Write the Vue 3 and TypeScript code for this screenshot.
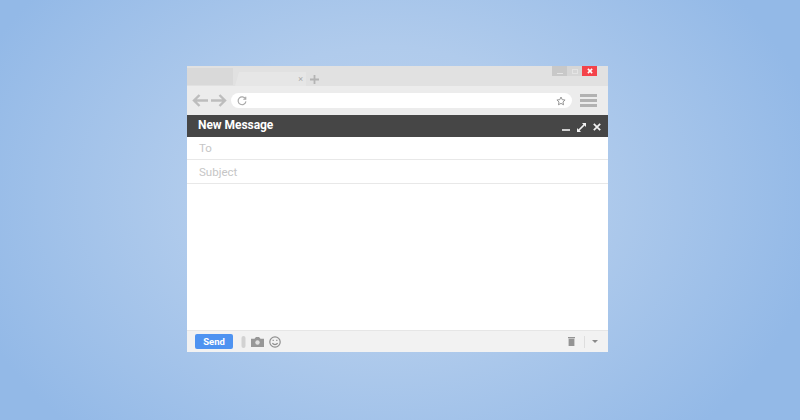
<template>
  <div class="page">
    <div class="window">
      <div class="tabbar">
        <div class="tab-old"></div>
        <div class="tab-active">
          <span class="tab-close">×</span>
        </div>
        <svg class="tab-new" width="9" height="9" viewBox="0 0 9 9">
          <path d="M4.500 0v9M0 4.500h9" stroke="#b4b4b4" stroke-width="1.800" />
        </svg>
        <div class="win-btns">
          <span class="win-btn"><i class="win-min"></i></span>
          <span class="win-btn light"><i class="win-max"></i></span>
          <span class="win-btn close">
            <svg width="6" height="6" viewBox="0 0 7 7">
              <path d="M1 1l5 5M6 1l-5 5" stroke="#fff" stroke-width="1.800" />
            </svg>
          </span>
        </div>
      </div>

      <div class="toolbar">
        <svg width="16" height="13" viewBox="0 0 16 13" fill="none" stroke="#bdbdbd" stroke-width="2.400">
          <path d="M16 6.500H2M7.500 1L2 6.500 7.500 12" />
        </svg>
        <svg class="forward" width="16" height="13" viewBox="0 0 16 13" fill="none" stroke="#bdbdbd" stroke-width="2.400">
          <path d="M0 6.500h14M8.500 1L14 6.500 8.500 12" />
        </svg>
        <div class="address">
          <svg width="10" height="10" viewBox="0 0 11 11" fill="none" stroke="#a8a8a8" stroke-width="1.300">
            <path d="M9.300 3.200A4.300 4.300 0 1 0 9.800 6" />
            <path d="M9.600 0.800v2.800H6.900" />
          </svg>
          <svg class="star" width="10" height="10" viewBox="0 0 24 24" fill="none" stroke="#8c8c8c" stroke-width="2.200">
            <path d="M12 2.500l2.900 6.300 6.900.8-5.100 4.700 1.400 6.800-6.100-3.400-6.100 3.400 1.400-6.800-5.100-4.700 6.900-.8z" />
          </svg>
        </div>
        <div class="menu"><i></i><i></i><i></i></div>
      </div>

      <div class="compose-head">
        <span class="compose-title">New Message</span>
        <div class="compose-actions">
          <svg width="8" height="8" viewBox="0 0 8 8"><path d="M0 7h8" stroke="#f2f2f2" stroke-width="1.600" /></svg>
          <svg width="9" height="9" viewBox="0 0 9 9" fill="#f2f2f2">
            <path d="M5 0h4v4L7.600 2.600 2.600 7.600 4 9H0V5l1.400 1.400 5-5z" />
          </svg>
          <svg width="8" height="8" viewBox="0 0 8 8"><path d="M.8.800l6.400 6.400M7.200.800L.8 7.200" stroke="#f2f2f2" stroke-width="1.700" /></svg>
        </div>
      </div>

      <div class="field to">To</div>
      <div class="field subject">Subject</div>
      <div class="body"></div>

      <div class="footer">
        <button class="send">Send</button>
        <svg class="clip" width="5" height="12" viewBox="0 0 5 12">
          <rect x="0.500" y="0" width="4" height="12" rx="2" fill="#d2d2d2" />
        </svg>
        <svg class="camera" width="13" height="10" viewBox="0 0 13 10">
          <path d="M0 1.800h3.500L5 0h3l1.500 1.800H13V10H0z" fill="#979797" />
          <circle cx="6.500" cy="5.500" r="2.200" fill="#e0e0e0" />
        </svg>
        <svg class="smile" width="12" height="12" viewBox="0 0 12 12" fill="none" stroke="#8f8f8f" stroke-width="1.200">
          <circle cx="6" cy="6" r="5.200" />
          <path d="M3.400 7.200c1.200 1.800 4 1.800 5.200 0" />
          <path d="M4.200 3.800v1.200M7.800 3.800v1.200" />
        </svg>
        <svg class="trash" width="7" height="9" viewBox="0 0 7 9">
          <path d="M0 0h7v1.200H0zM.6 1.800h5.800V9H.6z" fill="#949494" />
        </svg>
        <span class="divider"></span>
        <span class="caret"></span>
      </div>
    </div>
  </div>
</template>

<script setup lang="ts">
</script>

<style>
html,
body {
  margin: 0;
}
</style>

<style scoped>
.page {
  box-sizing: border-box;
  width: 800px;
  height: 420px;
  padding: 66px 192px 68px 187px;
  overflow: hidden;
  background: radial-gradient(ellipse 440px 330px at 385px 195px, #bcd2ef 0%, #b0cbec 45%, #93b9e7 100%);
  font-family: "Roboto", "Liberation Sans", sans-serif;
}

.window {
  display: flex;
  flex-direction: column;
  height: 286px;
  background: #fff;
}

.tabbar {
  display: flex;
  align-items: flex-end;
  height: 20px;
  background: #e1e1e1;
}

.tab-old {
  width: 46px;
  height: 17px;
  margin-bottom: 1px;
  background: #d9d9d9;
}

.tab-active {
  display: flex;
  align-items: center;
  justify-content: flex-end;
  width: 71px;
  height: 14px;
  margin-left: 2px;
  padding-right: 3px;
  box-sizing: border-box;
  background: #e6e6e6;
  clip-path: polygon(4px 0, 100% 0, 100% 100%, 0 100%);
}

.tab-close {
  color: #aaa;
  font-size: 9px;
  line-height: 1;
}

.tab-new {
  margin: 0 0 2px 4px;
}

.win-btns {
  display: flex;
  align-self: flex-start;
  margin-left: auto;
  margin-right: 11px;
}

.win-btn {
  display: flex;
  align-items: center;
  justify-content: center;
  width: 15px;
  height: 10px;
  background: #c8c8c8;
}

.win-btn.light {
  background: #d6d6d6;
}

.win-btn.close {
  background: #f4434a;
}

.win-min {
  width: 6px;
  height: 1px;
  margin-top: 4px;
  background: #e4e4e4;
}

.win-max {
  width: 6px;
  height: 5px;
  border: 1px solid #e4e4e4;
  box-sizing: border-box;
}

.toolbar {
  display: flex;
  align-items: center;
  height: 29px;
  padding: 0 11px 0 5px;
  box-sizing: border-box;
  background: #ececec;
}

.forward {
  margin-left: 3px;
}

.address {
  display: flex;
  flex: 1;
  align-items: center;
  justify-content: space-between;
  height: 15px;
  margin: 0 8px 0 4px;
  padding: 0 6px;
  border-radius: 8px;
  background: #fff;
}

.menu {
  display: flex;
  flex-direction: column;
  gap: 2px;
  width: 17px;
}

.menu i {
  height: 3px;
  background: #b2b2b2;
}

.compose-head {
  display: flex;
  align-items: center;
  justify-content: space-between;
  height: 22px;
  padding: 0 7px 2px 11px;
  box-sizing: border-box;
  background: #464646;
}

.compose-title {
  color: #fff;
  font-size: 12px;
  font-weight: 700;
  letter-spacing: -0.050px;
}

.compose-actions {
  display: flex;
  align-items: center;
  gap: 7px;
  padding-top: 4px;
}

.field {
  display: flex;
  align-items: center;
  padding-left: 12px;
  border-bottom: 1px solid #e8e8e8;
  box-sizing: border-box;
  color: #c6c6c6;
  font-size: 11.500px;
}

.to {
  height: 23px;
}

.subject {
  height: 24px;
}

.body {
  flex: 1;
}

.footer {
  display: flex;
  align-items: center;
  height: 22px;
  padding: 0 9px 0 8px;
  border-top: 1px solid #e6e6e6;
  box-sizing: border-box;
  background: #f2f2f2;
}

.send {
  width: 38px;
  height: 15px;
  padding: 0;
  border: 0;
  border-radius: 2px;
  background: #4e93f1;
  color: #fff;
  font-family: inherit;
  font-size: 9.500px;
  font-weight: 700;
}

.clip {
  margin: 0 5px 0 8px;
}

.smile {
  margin-left: 5px;
}

.trash {
  margin-left: auto;
}

.divider {
  width: 1px;
  height: 12px;
  margin: 0 7px 0 9px;
  background: #dedede;
}

.caret {
  width: 0;
  height: 0;
  margin-right: 1px;
  border: 3px solid transparent;
  border-top: 3px solid #8a8a8a;
  border-bottom: 0;
}
</style>
